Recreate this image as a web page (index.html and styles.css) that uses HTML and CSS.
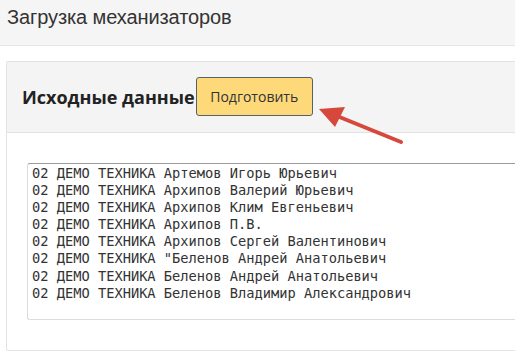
FILE: index.html
```html
<!DOCTYPE html>
<html lang="ru">
<head>
<meta charset="utf-8">
<title>Загрузка механизаторов</title>
<link rel="stylesheet" href="styles.css">
</head>
<body>
<header class="page-header">
  <h1 class="page-title">Загрузка механизаторов</h1>
</header>
<main class="content">
  <section class="card">
    <div class="card-header">
      <h2 class="card-title">Исходные данные</h2>
      <button class="btn-prepare" type="button">Подготовить</button>
      <svg class="arrow" width="100" height="50" viewBox="0 0 100 50" aria-hidden="true">
        <line x1="94" y1="44" x2="30" y2="18" stroke="#d6483c" stroke-width="4" stroke-linecap="round"/>
        <polygon points="12,11 38,9 28,29" fill="#d6483c"/>
      </svg>
    </div>
    <div class="card-body">
<textarea class="data-area" spellcheck="false">02 ДЕМО ТЕХНИКА Артемов Игорь Юрьевич
02 ДЕМО ТЕХНИКА Архипов Валерий Юрьевич
02 ДЕМО ТЕХНИКА Архипов Клим Евгеньевич
02 ДЕМО ТЕХНИКА Архипов П.В.
02 ДЕМО ТЕХНИКА Архипов Сергей Валентинович
02 ДЕМО ТЕХНИКА "Беленов Андрей Анатольевич
02 ДЕМО ТЕХНИКА Беленов Андрей Анатольевич
02 ДЕМО ТЕХНИКА Беленов Владимир Александрович</textarea>
    </div>
  </section>
</main>
</body>
</html>
```
FILE: styles.css
```css
html, body {
  margin: 0;
  padding: 0;
  background: #ffffff;
  overflow: hidden;
}

body {
  width: 515px;
  height: 356px;
  font-family: "Open Sans", "DejaVu Sans", sans-serif;
  color: #333;
}

.page-header {
  height: 45px;
  background: #f5f5f5;
  border-bottom: 1px solid #e6e6e6;
  display: flex;
  align-items: center;
  padding-left: 7px;
}

.page-title {
  margin: 0;
  font-family: "Liberation Sans", Arial, sans-serif;
  font-weight: normal;
  font-size: 20px;
  letter-spacing: -0.1px;
  color: #333;
  position: relative;
  top: -5px;
}

.content {
  padding: 15px 0 0 6px;
}

.card {
  border: 1px solid #e3e3e3;
  border-right: none;
  border-radius: 2px 0 0 2px;
  background: #fff;
}

.card-header {
  height: 70px;
  background: #f4f4f4;
  border-bottom: 1px solid #e3e3e3;
  display: flex;
  align-items: center;
  padding-left: 15px;
  position: relative;
}

.card-title {
  margin: 0;
  font-size: 18px;
  font-weight: 700;
  color: #222;
}

.btn-prepare {
  margin: -2px 0 0 1px;
  width: 117px;
  height: 39px;
  background: #fdd97a;
  border: 1px solid #56616b;
  border-radius: 3px;
  font-family: "Open Sans", "DejaVu Sans", sans-serif;
  font-size: 14px;
  color: #333;
  padding: 0;
}

.arrow {
  position: absolute;
  left: 300px;
  top: 36px;
  overflow: visible;
}

.card-body {
  padding: 30px 0 30px 20px;
}

.data-area {
  display: block;
  box-sizing: border-box;
  width: 100%;
  height: 157px;
  margin: 0;
  padding: 1px 4px;
  border: 1px solid #dcdcdc;
  border-top-color: #9a9a9a;
  border-right: none;
  border-radius: 3px 0 0 3px;
  font-family: "DejaVu Sans Mono", monospace;
  font-size: 13.7px;
  line-height: 17.1px;
  color: #333;
  resize: none;
  background: #fff;
  overflow: hidden;
}
```
